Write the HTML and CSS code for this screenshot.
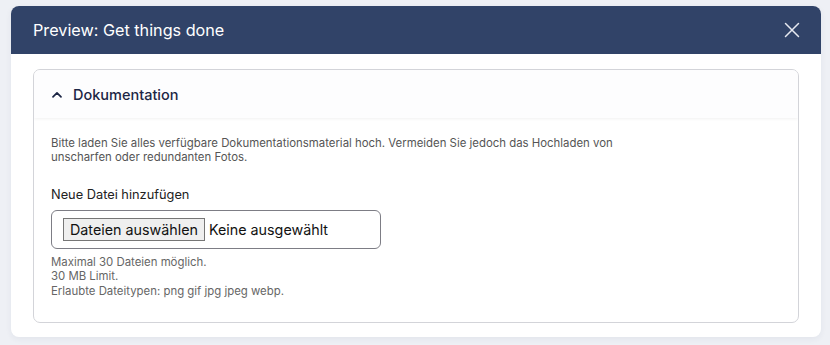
FILE: index.html
```html
<!DOCTYPE html>
<html lang="de">
<head>
    <meta charset="UTF-8">
    <meta name="viewport" content="width=device-width, initial-scale=1.0">
    <title>Preview: Get things done</title>
    <link rel="stylesheet" href="styles.css">
</head>
<body>
    <div class="backdrop">
        <div class="modal">
            <div class="modal-header">
                <h2 class="modal-title">Preview: Get things done</h2>
                <button class="close-btn" aria-label="Schließen">
                    <svg width="16" height="16" viewBox="0 0 16 16">
                        <path d="M1.5 1.5 L14.5 14.5 M14.5 1.5 L1.5 14.5" stroke="currentColor" stroke-width="1.5" stroke-linecap="round" fill="none"/>
                    </svg>
                </button>
            </div>

            <div class="modal-body">
                <div class="accordion">
                    <div class="accordion-header">
                        <svg class="chevron" width="10" height="7" viewBox="0 0 10 7">
                            <path d="M1 5.8 L5 1.8 L9 5.8" stroke="currentColor" stroke-width="1.7" fill="none" stroke-linecap="round" stroke-linejoin="round"/>
                        </svg>
                        <span class="accordion-title">Dokumentation</span>
                    </div>

                    <div class="accordion-body">
                        <p class="intro">Bitte laden Sie alles verfügbare Dokumentationsmaterial hoch. Vermeiden Sie jedoch das Hochladen von unscharfen oder redundanten Fotos.</p>

                        <label class="field-label">Neue Datei hinzufügen</label>
                        <div class="file-input">
                            <span class="file-btn">Dateien auswählen</span>
                            <span class="file-name">Keine ausgewählt</span>
                        </div>

                        <div class="help">
                            <p>Maximal 30 Dateien möglich.</p>
                            <p>30 MB Limit.</p>
                            <p>Erlaubte Dateitypen: png gif jpg jpeg webp.</p>
                        </div>
                    </div>
                </div>
            </div>
        </div>
    </div>
</body>
</html>
```

FILE: styles.css
```css
body {
    font-family: Inter, 'Noto Sans', sans-serif;
    background: #eef0f5;
    margin: 0;
    padding: 0;
    min-height: 100vh;
}

.backdrop {
    padding: 6px 9px 0 11px;
}

.modal {
    width: 810px;
    height: 331px;
    background: white;
    border-radius: 8px;
    overflow: hidden;
    box-shadow: 0 2px 6px rgba(40, 50, 90, 0.06);
}

.modal-header {
    display: flex;
    align-items: center;
    height: 48px;
    padding: 0 21px 0 22px;
    background: #314368;
}

.modal-title {
    margin: 0;
    font-size: 16.2px;
    font-weight: 400;
    color: white;
}

.close-btn {
    margin-left: auto;
    background: none;
    border: none;
    padding: 0;
    color: #e6e9f0;
    display: flex;
    cursor: pointer;
}

.modal-body {
    padding: 15px 22px 14px 22px;
}

.accordion {
    height: 252px;
    border: 1px solid #d3d4d9;
    border-radius: 7px;
    overflow: hidden;
}

.accordion-header {
    display: flex;
    align-items: center;
    height: 48px;
    padding: 0 18px 0 18px;
    background: #fdfdfe;
    box-shadow: 0 1px 3px rgba(0, 0, 0, 0.06);
}

.chevron {
    color: #1c2645;
    margin-right: 11px;
}

.accordion-title {
    font-size: 14.5px;
    font-weight: 500;
    color: #1c2645;
}

.accordion-body {
    padding: 18px 18px 0 17px;
}

.intro {
    margin: 0;
    width: 600px;
    font-size: 11.4px;
    line-height: 14px;
    color: #555;
}

.field-label {
    display: block;
    margin-top: 23px;
    font-size: 12.8px;
    color: #222;
}

.file-input {
    display: flex;
    align-items: center;
    width: 306px;
    height: 37px;
    margin-top: 8px;
    padding: 0 11px;
    border: 1px solid #7d7d85;
    border-radius: 6px;
}

.file-btn {
    padding: 2px 6px;
    font-size: 14.3px;
    color: #111;
    background: #efefef;
    border: 1px solid #767676;
}

.file-name {
    margin-left: 4px;
    font-size: 14.3px;
    color: #111;
}

.help {
    margin-top: 6px;
}

.help p {
    margin: 0;
    font-size: 11.4px;
    line-height: 14.4px;
    color: #666;
}
```
